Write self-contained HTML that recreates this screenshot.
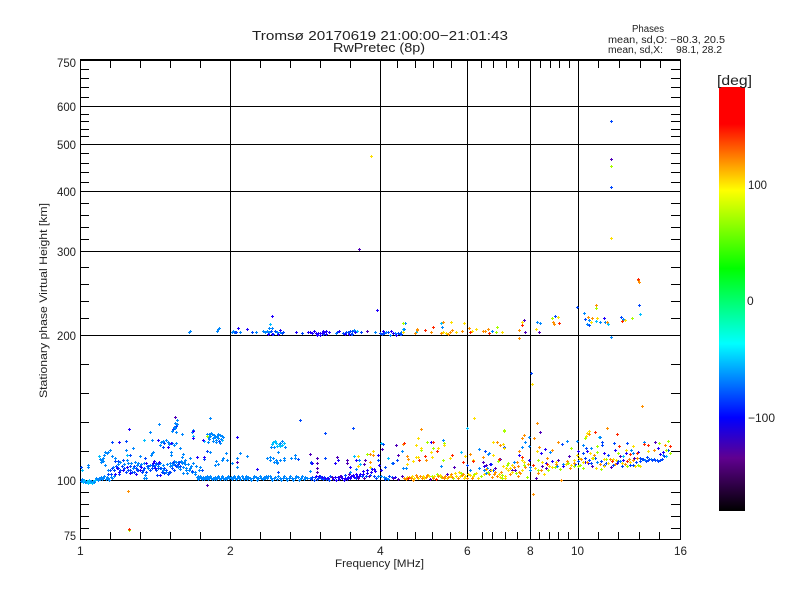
<!DOCTYPE html>
<html>
<head>
<meta charset="utf-8">
<title>Tromsø 20170619</title>
<style>
html,body{margin:0;padding:0;background:#fff;width:800px;height:600px;overflow:hidden}
svg{display:block}
text{font-family:"Liberation Sans",sans-serif;fill:#222}
.d polyline{fill:none;stroke:none}
.pa{marker:url(#a)}.pb{marker:url(#b)}.pc{marker:url(#c)}.pd{marker:url(#d)}.pe{marker:url(#e)}
.pf{marker:url(#f)}.pg{marker:url(#g)}.ph{marker:url(#h)}.pi{marker:url(#i)}
</style>
</head>
<body>
<svg width="800" height="600" viewBox="0 0 800 600" xmlns="http://www.w3.org/2000/svg">
<defs>
<linearGradient id="cb" gradientUnits="userSpaceOnUse" x1="0" y1="87" x2="0" y2="511">
<stop offset="0" stop-color="#f00"/><stop offset=".087" stop-color="#f00"/><stop offset=".2435" stop-color="#ff0"/>
<stop offset=".428" stop-color="#0f0"/><stop offset=".605" stop-color="#0ff"/><stop offset=".78" stop-color="#00f"/>
<stop offset=".875" stop-color="#600090"/><stop offset="1" stop-color="#000"/>
</linearGradient>
<marker id="a" markerUnits="userSpaceOnUse" markerWidth="3" markerHeight="3" refX="1" refY="1"><path d="M0 1h3v1H0zM1 0h1v3H1z" fill="#0088ff"/></marker>
<marker id="b" markerUnits="userSpaceOnUse" markerWidth="3" markerHeight="3" refX="1" refY="1"><path d="M0 1h3v1H0zM1 0h1v3H1z" fill="#0048ff"/></marker>
<marker id="c" markerUnits="userSpaceOnUse" markerWidth="3" markerHeight="3" refX="1" refY="1"><path d="M0 1h3v1H0zM1 0h1v3H1z" fill="#2000ff"/></marker>
<marker id="d" markerUnits="userSpaceOnUse" markerWidth="3" markerHeight="3" refX="1" refY="1"><path d="M0 1h3v1H0zM1 0h1v3H1z" fill="#00c0ff"/></marker>
<marker id="e" markerUnits="userSpaceOnUse" markerWidth="3" markerHeight="3" refX="1" refY="1"><path d="M0 1h3v1H0zM1 0h1v3H1z" fill="#5000b8"/></marker>
<marker id="f" markerUnits="userSpaceOnUse" markerWidth="3" markerHeight="3" refX="1" refY="1"><path d="M0 1h3v1H0zM1 0h1v3H1z" fill="#a8ff00"/></marker>
<marker id="g" markerUnits="userSpaceOnUse" markerWidth="3" markerHeight="3" refX="1" refY="1"><path d="M0 1h3v1H0zM1 0h1v3H1z" fill="#ffe000"/></marker>
<marker id="h" markerUnits="userSpaceOnUse" markerWidth="3" markerHeight="3" refX="1" refY="1"><path d="M0 1h3v1H0zM1 0h1v3H1z" fill="#ff9000"/></marker>
<marker id="i" markerUnits="userSpaceOnUse" markerWidth="3" markerHeight="3" refX="1" refY="1"><path d="M0 1h3v1H0zM1 0h1v3H1z" fill="#ff2800"/></marker>
</defs>

<g shape-rendering="crispEdges" fill="none" stroke="#000">
<path d="M80.5 60V540M680.5 60V540M80 539.5H681"/>
<path d="M80 60H681" stroke-width="2"/>
<path d="M230.5 60V540M380.5 60V540M467.5 60V540M530.5 60V540M578.5 60V540"/>
<path d="M80 106.5H681M80 144.5H681M80 191.5H681M80 251.5H681M80 335.5H681M80 480.5H681"/>
<path d="M110.5 60v8M140.5 60v8M170.5 60v8M200.5 60v8M260.5 60v8M290.5 60v8M320.5 60v8M350.5 60v8M397.5 60v8M415.5 60v8M433.5 60v8M451.5 60v8M481.5 60v8M493.5 60v8M506.5 60v8M518.5 60v8M540.5 60v8M550.5 60v8M559.5 60v8M569.5 60v8M598.5 60v8M619.5 60v8M640.5 60v8M660.5 60v8"/>
<path d="M110.5 532v7M140.5 532v7M170.5 532v7M200.5 532v7M260.5 532v7M290.5 532v7M320.5 532v7M350.5 532v7M397.5 532v7M415.5 532v7M432.5 532v7M450.5 532v7M482.5 532v7M492.5 532v7M505.5 532v7M517.5 532v7M539.5 532v7M549.5 532v7M558.5 532v7M568.5 532v7M598.5 532v7M618.5 532v7M639.5 532v7M659.5 532v7"/>
<path d="M80 69.5h9M80 78.5h9M80 87.5h9M80 97.5h9M80 114.5h9M80 121.5h9M80 129.5h9M80 136.5h9M80 153.5h9M80 163.5h9M80 172.5h9M80 182.5h9M80 203.5h9M80 215.5h9M80 227.5h9M80 239.5h9M80 267.5h9M80 284.5h9M80 301.5h9M80 318.5h9M80 364.5h9M80 393.5h9M80 422.5h9M80 451.5h9M80 492.5h9M80 504.5h9M80 516.5h9M80 528.5h9"/>
<path d="M671 69.5h9M671 78.5h9M671 87.5h9M671 97.5h9M671 114.5h9M671 121.5h9M671 129.5h9M671 136.5h9M671 153.5h9M671 163.5h9M671 172.5h9M671 182.5h9M671 203.5h9M671 215.5h9M671 227.5h9M671 239.5h9M671 267.5h9M671 284.5h9M671 301.5h9M671 318.5h9M671 364.5h9M671 393.5h9M671 422.5h9M671 451.5h9M671 492.5h9M671 504.5h9M671 516.5h9M671 528.5h9"/>
</g>

<g class="d" shape-rendering="crispEdges">
<polyline class="pd" points="82,470 84,480 87,481 90,482 92,483 95,480 99,456 127,455 144,440 177,420 193,436 204,441 222,440 273,442 276,443 279,444 282,445 277,446 295,478 300,479 354,456 360,464 381,443 388,458 371,468 416,332 441,323 596,321 608,324 640,314 461,452 666,456 623,456 357,331 403,329 270,324 467,428 599,437 83,482 86,482 89,480 93,481 88,483 275,441 272,444 280,446 284,443"/>
<polyline class="pa" points="81,481 97,479 99,478 101,477 103,478 106,479 108,478 111,477 88,465 88,467 102,460 103,461 100,459 104,455 108,452 107,453 110,450 126,450 133,448 113,467 108,470 127,460 133,468 137,465 145,475 144,478 146,478 140,456 152,453 153,452 151,455 148,468 161,468 163,470 166,472 150,432 152,440 159,424 160,445 168,442 174,445 171,452 171,455 177,420 174,427 172,431 182,434 176,443 176,462 182,463 185,464 172,465 180,448 183,454 182,457 185,460 190,458 192,432 193,430 209,434 212,434 210,436 208,437 210,418 215,437 218,438 216,440 222,436 221,439 218,434 210,452 226,453 227,460 240,453 247,456 237,458 216,461 218,464 222,460 215,465 223,458 232,463 237,467 200,467 190,468 186,470 183,473 187,473 180,469 195,474 170,463 175,465 178,467 197,477 199,478 201,478 203,477 205,477 207,476 209,477 211,478 213,478 215,477 217,477 219,478 221,478 223,478 225,478 227,477 229,478 231,477 233,477 235,478 237,478 239,477 243,478 245,478 247,479 250,478 253,478 256,477 258,478 261,478 264,477 266,476 268,476 271,478 274,478 277,479 280,478 283,478 286,478 289,478 292,478 295,478 298,477 301,478 304,479 307,478 310,478 378,476 381,476 384,477 386,478 388,479 278,452 270,457 273,458 276,460 280,460 284,460 277,462 277,463 295,455 295,458 291,458 310,471 359,460 350,472 356,469 406,468 403,468 392,463 402,451 443,440 441,466 479,449 489,453 488,454 470,470 484,470 486,473 479,468 487,468 514,462 522,447 525,442 529,446 529,437 530,467 530,470 550,452 567,441 577,441 583,445 591,448 563,464 557,466 597,462 600,437 631,450 633,453 663,455 644,442 620,461 645,460 651,459 190,331 189,332 217,331 218,329 219,328 232,332 234,332 233,331 240,332 256,332 263,331 265,332 267,331 269,332 269,328 272,328 277,332 280,332 354,330 375,332 386,332 390,335 395,333 404,329 401,332 442,327 492,331 537,322 540,323 584,313 589,320 587,324 600,322 605,322 623,319 611,337 336,333 405,323
82,479 85,482 91,481 94,482 96,478 98,480 100,479 102,479 104,476 107,477 109,480 112,478 114,476 198,479 200,476 202,479 204,479 206,478 208,479 210,476 212,479 214,479 216,479 218,476 220,479 222,476 224,479 226,479 228,476 232,479 234,476 236,479 238,476 240,479 242,476 244,479 246,476 248,477 251,480 254,476 257,480 260,476 263,479 265,478 267,478 270,476 272,480 275,477 278,476 281,480 284,476 287,480 290,476 293,480 296,476 299,480 302,476 305,477 172,463 174,464 177,465 180,466 183,467 186,468 189,470 192,472 195,472 198,476 207,434 211,433 214,435 217,436 220,435 223,437 213,438 209,439 216,442 220,443 213,441 208,442 105,452 103,458 101,462 112,456 105,465 115,458 161,442 163,441 166,440 169,444 172,443 176,432 175,428 175,423 177,424 120,462 124,464 128,463 131,463 135,462 118,464 138,463 141,464 144,463 147,466 150,465 155,465 158,466 160,463 163,465 167,464 170,466 174,461 178,462 181,461 184,462 188,464 191,466 193,463 196,466 199,470 271,447 274,447 280,443 285,447 282,441 270,460 274,462 284,458 267,458"/>
<polyline class="pb" points="81,467 112,442 126,441 130,455 115,461 118,461 108,474 111,474 119,474 123,460 130,470 143,470 137,470 134,472 145,458 156,463 152,468 158,468 157,475 164,473 169,472 164,443 163,447 173,429 176,426 173,462 179,462 175,465 204,459 202,470 192,471 207,451 219,441 300,420 278,472 298,459 311,462 311,463 325,433 353,428 325,458 378,460 383,444 385,467 393,463 397,460 467,465 485,451 491,464 493,470 504,447 583,453 586,448 602,442 602,445 614,443 627,443 591,463 618,461 633,465 642,459 648,460 654,459 657,460 660,460 608,455 235,332 252,332 236,332 271,331 275,331 273,334 283,332 282,333 302,333 323,334 337,332 343,333 346,332 348,332 350,331 352,331 351,334 352,334 361,332 380,333 382,334 384,333 388,332 398,333 400,334 401,334 555,316 577,307 585,319 589,325 639,305 621,317 611,121 611,187 531,373 562,444 604,465
110,470 112,468 114,470 116,466 118,468 120,470 122,466 124,468 126,472 128,470 130,466 132,472 134,466 136,468 138,470 140,466 142,472 144,468 146,472 148,466 150,470 152,465 154,466 156,470 158,464 160,468 162,472 164,468 166,470 168,474 170,472 172,468 174,470 176,466 178,464 180,466 312,477 315,477 318,478 321,478 324,477 327,478 330,476 311,479 314,480 317,479 320,476 323,479 326,479 329,480 392,477 389,476 385,479 345,475 356,478 362,476 366,476 370,475 374,476 376,478 640,461 643,459 646,461 649,459 652,460 655,460 658,461 640,458 647,457 662,459 664,456 668,450 595,458 601,461 606,463 613,465 622,466 630,465 636,462 589,460 585,458 578,461 575,464"/>
<polyline class="pc" points="119,442 129,429 117,468 115,474 127,467 140,470 153,463 159,462 155,468 160,475 158,440 171,443 168,447 197,457 204,457 193,431 193,438 203,440 237,437 257,469 312,463 338,460 335,463 350,467 356,460 363,471 367,470 372,469 374,469 378,455 379,465 381,470 431,442 490,470 490,464 484,466 519,455 541,453 545,449 578,451 587,451 604,453 615,450 626,453 623,460 617,463 612,461 546,463 552,461 588,463 585,462 563,466 529,460 638,452 333,479 336,480 339,479 342,478 345,478 348,477 351,476 354,477 357,476 360,474 328,478 325,478 322,477 319,476 316,476 238,328 247,329 272,316 296,332 310,332 316,333 318,333 320,333 322,333 324,332 326,331 395,477 604,318 377,310
335,477 338,477 341,476 344,480 347,479 350,478 353,475 356,474 359,476 363,474 367,473 371,472 375,471 130,473 136,474 141,467 146,463 154,461 119,472 123,470 308,332 312,333 314,331 317,335 320,335 323,331 326,334 329,332 272,334 268,334 278,334 280,330 339,331 345,334 349,334 355,332 383,331 391,331 393,333 396,335 660,454 663,452 658,448"/>
<polyline class="pe" points="175,417 207,485 237,462 310,454 317,458 317,463 317,468 317,472 337,457 347,460 347,463 365,460 364,464 382,449 396,445 398,455 398,479 454,467 483,462 500,459 515,470 540,432 626,450 655,442 546,468 542,466 536,478 367,331 524,320 539,332 525,332 611,159 359,249 332,477 340,476 349,474 358,478 369,476 364,478 430,479 447,474 486,465 495,468 512,470 558,460 569,456 592,466 611,467 620,456 634,458 393,478 402,476"/>
<polyline class="pf" points="207,436 129,530 367,454 427,442 433,448 421,448 421,450 444,443 443,460 498,461 504,430 504,431 507,465 524,465 538,460 538,470 571,448 585,438 580,465 578,466 555,467 527,477 597,446 593,458 618,453 627,466 638,465 659,443 668,441 666,450 670,446 670,453 432,476 453,478 481,476 502,478 502,475 403,323 497,327 496,332 552,318 596,308 632,318 611,166 437,474 441,477 461,473 474,474 488,472 508,463 516,473 548,470 560,469 574,466 597,452 601,469 583,468 606,459 568,463"/>
<polyline class="pg" points="358,456 373,451 370,467 407,464 413,461 416,445 418,438 421,448 416,457 418,457 431,452 432,457 438,448 444,445 450,458 465,456 473,460 474,418 493,455 493,442 504,448 503,444 414,478 423,476 429,476 456,476 459,472 465,476 468,474 473,476 476,473 478,478 505,476 499,474 500,477 505,478 512,465 510,468 506,468 522,460 522,470 532,384 537,451 544,474 552,467 571,465 579,458 577,455 587,433 586,436 589,431 590,453 604,459 604,466 613,459 626,450 633,446 640,466 648,451 358,466 371,156 403,332 456,332 464,323 472,331 476,329 502,332 451,322 446,333 443,332 522,322 536,329 558,317 591,322 597,318 625,320 611,238
407,477 412,476 418,478 424,478 428,475 434,476 440,475 447,478 450,476 455,473 460,476 464,478 470,475 484,474 491,470 503,466 508,470 512,472 524,462 535,468 542,462 549,466 556,462 566,464 574,460 583,462 592,458 596,468 608,463 616,460 622,463 630,462 635,466"/>
<polyline class="ph" points="128,491 370,454 373,455 370,462 403,444 407,456 408,459 421,429 426,460 483,457 497,442 470,454 492,477 500,445 404,478 406,479 411,478 417,477 420,476 426,477 442,477 445,476 448,477 451,474 462,475 489,474 495,472 497,476 518,476 519,472 520,473 518,466 514,467 519,451 524,435 522,438 525,467 534,438 539,447 537,423 538,473 552,450 558,442 533,494 561,480 570,468 567,461 589,434 594,455 607,428 600,464 617,434 633,460 629,459 654,450 665,445 642,406 417,329 415,333 417,330 431,332 443,322 441,333 448,334 450,332 452,330 462,331 469,328 485,331 483,331 488,329 519,338 519,330 553,322 554,324 596,305 588,317 592,318 607,322 638,280 639,282
409,477 413,480 416,475 422,478 427,475 433,478 438,476 444,478 452,477 458,478 463,474 467,478 472,478 486,469 494,474 501,472 510,474 517,462 528,464 541,470 547,458 556,464 574,463 581,459 587,462 610,459 615,464 625,464 637,458"/>
<polyline class="pi" points="129,529 404,443 433,442 425,456 419,460 437,451 452,455 463,462 473,461 499,459 408,478 436,479 522,457 533,465 547,464 595,432 617,434 619,446 644,444 648,445 670,446 637,453 630,454 627,461 612,461 425,330 433,327 470,332 489,333 522,325 559,323 622,321 638,279"/>
</g>

<rect x="719" y="87" width="26" height="424" fill="url(#cb)" shape-rendering="crispEdges"/>

<text x="252" y="40" font-size="13" textLength="256" lengthAdjust="spacingAndGlyphs">Tromsø 20170619 21:00:00−21:01:43</text>
<text x="333" y="52" font-size="13" textLength="92" lengthAdjust="spacingAndGlyphs">RwPretec (8p)</text>
<text x="632" y="32" font-size="10" textLength="32" lengthAdjust="spacingAndGlyphs">Phases</text>
<text x="608" y="43" font-size="10" textLength="117" lengthAdjust="spacingAndGlyphs">mean, sd,O: −80.3, 20.5</text>
<text x="608" y="53" font-size="10" textLength="55" lengthAdjust="spacingAndGlyphs">mean, sd,X:</text>
<text x="676" y="53" font-size="10" textLength="46" lengthAdjust="spacingAndGlyphs">98.1, 28.2</text>

<g font-size="12">
<text x="57" y="67" textLength="19" lengthAdjust="spacingAndGlyphs">750</text>
<text x="57" y="111" textLength="19" lengthAdjust="spacingAndGlyphs">600</text>
<text x="57" y="149" textLength="19" lengthAdjust="spacingAndGlyphs">500</text>
<text x="57" y="196" textLength="19" lengthAdjust="spacingAndGlyphs">400</text>
<text x="57" y="256" textLength="19" lengthAdjust="spacingAndGlyphs">300</text>
<text x="57" y="340" textLength="19" lengthAdjust="spacingAndGlyphs">200</text>
<text x="57" y="485" textLength="19" lengthAdjust="spacingAndGlyphs">100</text>
<text x="64" y="540" textLength="12" lengthAdjust="spacingAndGlyphs">75</text>
<text x="77" y="555">1</text>
<text x="227" y="555">2</text>
<text x="377" y="555">4</text>
<text x="464" y="555">6</text>
<text x="527" y="555">8</text>
<text x="571" y="555" textLength="13" lengthAdjust="spacingAndGlyphs">10</text>
<text x="674" y="555" textLength="13" lengthAdjust="spacingAndGlyphs">16</text>
<text x="748" y="189" textLength="19" lengthAdjust="spacingAndGlyphs">100</text>
<text x="747" y="305">0</text>
<text x="748" y="422" textLength="27" lengthAdjust="spacingAndGlyphs">−100</text>
</g>
<text x="335" y="567" font-size="11" textLength="89" lengthAdjust="spacingAndGlyphs">Frequency [MHz]</text>
<text x="717" y="85" font-size="14" textLength="35" lengthAdjust="spacingAndGlyphs">[deg]</text>
<text transform="translate(47,398) rotate(-90)" font-size="11" textLength="195" lengthAdjust="spacingAndGlyphs">Stationary phase Virtual Height [km]</text>
</svg>
</body>
</html>
